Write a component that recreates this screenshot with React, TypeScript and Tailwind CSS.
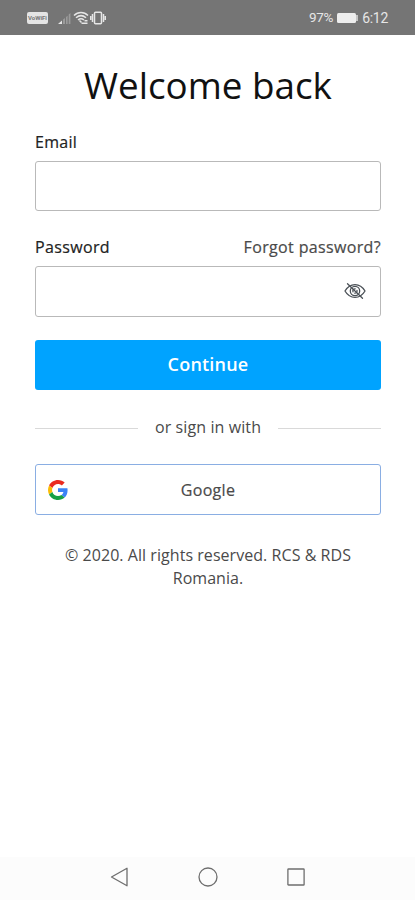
import { useState } from 'react';

function StatusBar() {
  return (
    <header className="h-[35px] shrink-0 bg-[#757575] flex items-center justify-between pl-[27px] pr-[27px] text-[#e6e6e6] font-['Roboto',sans-serif]">
      <div className="flex items-center">
        <span className="w-[21px] h-[12px] rounded-[2px] bg-[#e4e4e4] text-[#757575] text-[6px] leading-[12px] font-bold text-center">
          VoWiFi
        </span>
        <svg className="ml-[8px]" width="16" height="14" viewBox="0 0 16 14" aria-hidden="true">
          <path d="M2 13h4V9.5z" fill="#e6e6e6" />
          <path d="M7 13V8.5l2-1.5v6zM10 13V6l1.6-1.3V13zM12.7 13V3.6L14.4 2v11z" fill="#9b9b9b" />
        </svg>
        <svg className="ml-[1px]" width="17" height="14" viewBox="0 0 17 14" fill="none" stroke="#e6e6e6" strokeWidth="1.500" aria-hidden="true">
          <path d="M1 4.500C5 .5 11 .5 15 4.500" />
          <path d="M3 6.800C6 4.200 10 4.200 13 6.800" />
          <path d="M5 9c1.800-1.500 4.200-1.500 6 0M6.500 9.500l2 2" />
          <path d="M8.500 12.200h6M11.500 9.700h3" />
        </svg>
        <svg width="16" height="14" viewBox="0 0 16 14" fill="none" stroke="#e6e6e6" strokeWidth="1.500" aria-hidden="true">
          <rect x="4.500" y="1.200" width="7" height="11.600" rx="1" />
          <path d="M2.500 3v8M13.500 3v8M.7 5v4M15.300 5v4" />
        </svg>
      </div>
      <div className="flex items-center text-[14px] tracking-[-0.3px] leading-none">
        <span className="text-[13.500px]">97%</span>
        <span className="ml-[4px] w-[19px] h-[10px] rounded-[1.500px] bg-[#ededed]" />
        <span className="w-[2px] h-[6px] bg-[#c4c4c4]" />
        <span className="ml-[4px]">6:12</span>
      </div>
    </header>
  );
}

function EyeOffIcon() {
  return (
    <svg width="22" height="18" viewBox="0 0 22 18" fill="none" stroke="#4b5157" strokeWidth="1.300" strokeLinecap="round" aria-hidden="true">
      <path d="M1 9C6 .5 16 .5 21 9 16 17.500 6 17.500 1 9z" />
      <circle cx="11" cy="9" r="4.700" />
      <path d="M9 9.800a2.200 2.200 0 0 1 2.200-3M13 8.500a2.200 2.200 0 0 1-2.200 2.700" />
      <path d="M3.500 1.800 18.500 16.200" />
    </svg>
  );
}

function GoogleIcon() {
  return (
    <svg width="20" height="20" viewBox="0 0 48 48" aria-hidden="true">
      <path fill="#ea2b1f" d="M24 9.500c3.540 0 6.710 1.220 9.210 3.600l6.850-6.850C35.900 2.380 30.470 0 24 0 14.620 0 6.510 5.380 2.560 13.220l7.980 6.190C12.430 13.720 17.740 9.500 24 9.500z" />
      <path fill="#3b82f6" d="M46.980 24.550c0-1.570-.15-3.090-.38-4.550H24v9.020h12.940c-.58 2.960-2.260 5.480-4.780 7.180l7.730 6c4.510-4.180 7.090-10.360 7.090-17.650z" />
      <path fill="#fbbc05" d="M10.530 28.590c-.48-1.450-.76-2.990-.76-4.590s.27-3.140.76-4.590l-7.980-6.190C.92 16.460 0 20.120 0 24c0 3.880.92 7.540 2.560 10.780l7.970-6.190z" />
      <path fill="#16a045" d="M24 48c6.480 0 11.930-2.130 15.890-5.810l-7.730-6c-2.150 1.450-4.920 2.300-8.160 2.300-6.260 0-11.570-4.220-13.470-9.910l-7.980 6.190C6.510 42.620 14.620 48 24 48z" />
    </svg>
  );
}

function NavBar() {
  return (
    <nav className="h-[43px] shrink-0 bg-[#fcfcfc] flex items-center justify-center gap-[68px] pb-[3px]">
      <svg width="20" height="20" viewBox="0 0 20 20" fill="none" stroke="#6e6e6e" strokeWidth="1.300" strokeLinejoin="round" aria-hidden="true">
        <path d="M17 1.200v17.600L1.500 10z" />
      </svg>
      <svg width="20" height="20" viewBox="0 0 20 20" fill="none" stroke="#6e6e6e" strokeWidth="1.300" aria-hidden="true">
        <circle cx="10" cy="10" r="9" />
      </svg>
      <svg width="20" height="20" viewBox="0 0 20 20" fill="none" stroke="#6e6e6e" strokeWidth="1.300" aria-hidden="true">
        <rect x="1.900" y="2" width="16.200" height="16" rx=".6" />
      </svg>
    </nav>
  );
}

export default function App() {
  const [email, setEmail] = useState('');
  const [password, setPassword] = useState('');
  const [visible, setVisible] = useState(false);

  return (
    <div className="h-[900px] w-full flex flex-col bg-white font-['Open_Sans',sans-serif] text-[#4a4a4a]">
      <StatusBar />
      <main className="flex-1 pl-[35px] pr-[34px] pt-[25px]">
        <h1 className="text-center text-[36.800px] leading-[50px] text-[#111] whitespace-nowrap">Welcome back</h1>

        <form onSubmit={(e) => e.preventDefault()}>
          <label htmlFor="email" className="block mt-[21px] h-[30px] text-[16px] leading-[22px] tracking-[0.3px] [-webkit-text-stroke:0.2px_#222] text-[#222]">
            Email
          </label>
          <input
            id="email"
            type="email"
            value={email}
            onChange={(e) => setEmail(e.target.value)}
            className="block w-full h-[50px] px-3 rounded-[3px] border border-[#b9b9b9] outline-none"
          />

          <div className="mt-[25px] h-[30px] flex justify-between text-[16px] leading-[22px] tracking-[0.35px]">
            <label htmlFor="password" className="[-webkit-text-stroke:0.2px_#222] text-[#222]">Password</label>
            <a href="#" className="[-webkit-text-stroke:0.2px_#4a4a4a]">Forgot password?</a>
          </div>
          <div className="h-[51px] flex items-center pr-[14px] pb-px rounded-[3px] border border-[#b9b9b9]">
            <input
              id="password"
              type={visible ? 'text' : 'password'}
              value={password}
              onChange={(e) => setPassword(e.target.value)}
              className="flex-1 h-full px-3 outline-none"
            />
            <button type="button" aria-label="Toggle password" onClick={() => setVisible(!visible)}>
              <EyeOffIcon />
            </button>
          </div>

          <button type="submit" className="mt-[23px] block w-full h-[50px] pb-px rounded-[3px] bg-[#00a3ff] text-white text-[18px] font-semibold tracking-[0.2px]">
            Continue
          </button>
        </form>

        <div className="mt-[26px] flex items-center gap-[17px] text-[16px] leading-[22px]">
          <span className="flex-1 h-px mt-[2px] bg-[#d9d9d9]" />
          <span className="tracking-[0.1px]">or sign in with</span>
          <span className="flex-1 h-px mt-[2px] bg-[#d9d9d9]" />
        </div>

        <button type="button" className="mt-[26px] w-full h-[51px] px-[12px] flex items-center rounded-[3px] border border-[#8aaee3]">
          <GoogleIcon />
          <span className="flex-1 pr-[20px] text-center text-[16px] tracking-[0.3px] [-webkit-text-stroke:0.2px_#4a4a4a]">Google</span>
        </button>

        <p className="mt-[29px] px-[20px] text-center text-[16px] leading-[23px] tracking-[0.05px]">
          © 2020. All rights reserved. RCS &amp; RDS Romania.
        </p>
      </main>
      <NavBar />
    </div>
  );
}
